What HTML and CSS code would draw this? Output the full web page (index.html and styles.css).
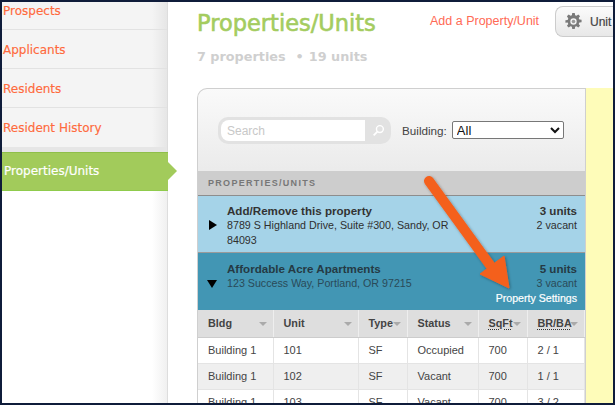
FILE: index.html
```html
<!DOCTYPE html>
<html lang="en">
<head>
<meta charset="utf-8">
<title>Properties/Units</title>
<link rel="stylesheet" href="styles.css">
</head>
<body>
<div class="frame">
  <nav class="sidebar">
    <a class="nav-item nav-first">Prospects</a>
    <a class="nav-item">Applicants</a>
    <a class="nav-item">Residents</a>
    <a class="nav-item nav-last">Resident History</a>
    <a class="nav-active">Properties/Units</a>
  </nav>
  <main class="content">
    <header class="head">
      <h1 class="title">Properties/Units</h1>
      <a class="add-link">Add a Property/Unit</a>
      <button class="unit-btn">
        <svg class="gear" viewBox="0 0 16 16" width="17" height="17"><path fill="#7a7a7a" fill-rule="evenodd" d="M6.800 0h2.400l.3 2.100 1.300.5L12.500 1.300l1.700 1.700-1.300 1.700.6 1.300 2.100.3v2.400l-2.100.3-.6 1.300 1.300 1.700-1.700 1.700-1.700-1.300-1.300.6-.3 2.100H6.800l-.3-2.100-1.300-.6-1.700 1.300-1.700-1.700 1.300-1.700-.6-1.300L.4 9.200V6.800l2.100-.3.6-1.300L1.800 3l1.700-1.700 1.700 1.300 1.300-.5zM8 5a3 3 0 1 0 0 6 3 3 0 0 0 0-6z"/><circle cx="8" cy="8" r="1.700" fill="#999"/></svg>
        <span class="unit-label">Unit Settings</span>
      </button>
    </header>
    <p class="counts"><span>7 properties</span><span class="dot">•</span><span>19 units</span></p>
    <div class="panel-row">
      <section class="panel">
        <div class="filters">
          <div class="search">
            <span class="search-input">Search</span>
            <svg class="search-icon" viewBox="0 0 14 14" width="13" height="13"><circle cx="8.500" cy="5.500" r="3.700" fill="none" stroke="#fff" stroke-width="1.500"/><path d="M5.800 8.300L1.800 12.300" stroke="#fff" stroke-width="2"/></svg>
          </div>
          <label class="building-label">Building:</label>
          <select class="building-select"><option>All</option></select>
        </div>
        <div class="section-bar">PROPERTIES/UNITS</div>
        <div class="prop prop-light">
          <span class="tri tri-right"></span>
          <div class="prop-main">
            <div class="prop-name">Add/Remove this property</div>
            <div class="prop-addr">8789 S Highland Drive, Suite #300, Sandy, OR 84093</div>
          </div>
          <div class="prop-side">
            <div class="prop-name">3 units</div>
            <div class="prop-addr">2 vacant</div>
          </div>
        </div>
        <div class="prop prop-dark">
          <span class="tri tri-down"></span>
          <div class="prop-main">
            <div class="prop-name">Affordable Acre Apartments</div>
            <div class="prop-addr">123 Success Way, Portland, OR 97215</div>
          </div>
          <div class="prop-side">
            <div class="prop-name">5 units</div>
            <div class="prop-addr">3 vacant</div>
            <div class="prop-link">Property Settings</div>
          </div>
        </div>
        <table class="units">
          <colgroup><col class="c1"><col class="c2"><col class="c3"><col class="c4"><col class="c5"><col class="c6"></colgroup>
          <thead>
            <tr>
              <th>Bldg<i class="sort"></i></th>
              <th>Unit<i class="sort"></i></th>
              <th>Type<i class="sort"></i></th>
              <th>Status<i class="sort"></i></th>
              <th><u class="abbr">SqFt</u><i class="sort"></i></th>
              <th><u class="abbr">BR/BA</u><i class="sort"></i></th>
            </tr>
          </thead>
          <tbody>
            <tr><td>Building 1</td><td>101</td><td>SF</td><td>Occupied</td><td>700</td><td>2 / 1</td></tr>
            <tr class="alt"><td>Building 1</td><td>102</td><td>SF</td><td>Vacant</td><td>700</td><td>1 / 1</td></tr>
            <tr><td>Building 1</td><td>103</td><td>SF</td><td>Vacant</td><td>700</td><td>3 / 2</td></tr>
          </tbody>
        </table>
      </section>
      <aside class="note"></aside>
    </div>
  </main>
  <svg class="arrow" viewBox="0 0 615 405" width="615" height="405">
    <defs><filter id="sh" x="-20%" y="-20%" width="140%" height="140%"><feDropShadow dx="1" dy="1" stdDeviation="1.500" flood-color="#000" flood-opacity=".35"/></filter></defs>
    <g filter="url(#sh)">
      <path d="M429 181L490 265" stroke="#f4601c" stroke-width="10" stroke-linecap="round" fill="none"/>
      <path d="M480 274L504 256L509 288Z" fill="#f4601c" stroke="#f4601c" stroke-width="1" stroke-linejoin="round"/>
    </g>
  </svg>
</div>
</body>
</html>
```
FILE: styles.css
```css
* { box-sizing: border-box; }
html, body { margin: 0; padding: 0; }
body { width: 615px; height: 405px; overflow: hidden; background: #0f1c3a; font-family: "Liberation Sans", Arial, sans-serif; }
.frame { position: relative; width: 611px; height: 401px; margin: 2px 0 0 2px; background: #fff; display: flex; overflow: hidden; }
.sidebar { width: 166px; flex: none; height: 100%; border-right: 1px solid #ddd; background: linear-gradient(to right, #fff 0, #fff 150px, #f0f0f0 165px); font-family: "DejaVu Sans", sans-serif; font-size: 12px; position: relative; }
.nav-item { display: block; height: 39px; padding: 13px 0 0 1px; line-height: 15px; color: #ff6a3d; -webkit-text-stroke: .15px #ff6a3d; background: linear-gradient(to right, #f4f4f4 0, #f4f4f4 150px, #e6e6e6 165px); border-bottom: 1px solid #e2e2e2; }
.nav-first { height: 28px; padding-top: 2px; }
.nav-last { height: 44px; border-bottom: 5px solid #e6e6e6; }
.nav-active { display: block; position: relative; height: 39px; width: 166px; padding: 11px 0 0 2px; line-height: 15px; color: #fff; background: #a2cb5b; border-top: 1px solid #8fbf4a; border-bottom: 1px solid #8fcb4c; -webkit-text-stroke: .2px #fff; }
.nav-active::after { content: ""; position: absolute; left: 166px; top: 9px; border-left: 9px solid #a2cb5b; border-top: 9px solid transparent; border-bottom: 9px solid transparent; }
.content { flex: 1; min-width: 0; padding: 8px 0 0 29px; }
.head { display: flex; align-items: flex-start; height: 32px; white-space: nowrap; }
.title { flex: none; margin: 0; width: 233px; font-family: "DejaVu Sans", sans-serif; font-size: 22.500px; line-height: 26px; font-weight: 400; color: #a4cc5f; -webkit-text-stroke: .6px #a4cc5f; }
.add-link { flex: none; width: 125px; margin-top: 4px; font-size: 12.500px; line-height: 15px; color: #ff6a55; }
.unit-btn { flex: none; display: flex; align-items: center; gap: 8px; width: 70px; height: 31px; margin-top: -4px; padding: 0 0 0 9px; border: 1px solid #ccc; border-right: 0; border-radius: 8px 0 0 8px; background: linear-gradient(#fbfbfb, #e8e8e8); font: 400 12px "Liberation Sans", sans-serif; color: #444; overflow: hidden; white-space: nowrap; }
.gear { flex: none; }
.unit-label { flex: none; -webkit-text-stroke: .2px #444; }
.counts { margin: 7px 0 0; display: flex; gap: 6px; font-family: "DejaVu Sans", sans-serif; font-size: 12.800px; line-height: 16px; font-weight: 700; color: #cfcfcf; }
.dot { margin-left: 4px; margin-right: -1px; }
.panel-row { display: flex; margin-top: 23px; height: 320px; }
.panel { width: 389px; flex: none; border: 1px solid #cfcfcf; border-width: 1px 1px 0 1px; border-radius: 10px 0 0 0; background: linear-gradient(#fafafa, #ebebeb 80px); overflow: hidden; }
.filters { display: flex; align-items: center; height: 82px; padding: 0 0 0 20px; }
.search { display: flex; align-items: center; width: 173px; height: 27px; background: #e2e2e2; border-radius: 10px; padding: 0 0 0 3px; }
.search-input { width: 144px; height: 21px; background: #fff; border-radius: 8px 0 0 8px; padding-left: 6px; font-size: 12px; line-height: 23px; color: #c8c8c8; }
.search-icon { margin-left: 7px; }
.building-label { margin-left: 11px; font-size: 11.700px; color: #444; }
.building-select { width: 112px; height: 18px; margin-left: 5px; padding: 0; font: 400 13px "Liberation Sans", sans-serif; color: #111; background: #fff; border: 1px solid #777; border-radius: 2px; }
.section-bar { height: 25px; background: #cdcdcd; border-bottom: 1px solid #8d8d8d; padding-left: 10px; font-size: 9px; line-height: 24px; font-weight: 700; letter-spacing: 1.300px; color: #777; }
.prop { display: flex; padding: 7px 8px 0 0; }
.prop-light { height: 57px; background: #a5d3e8; border-bottom: 1px solid #9a9a9a; }
.prop-dark { height: 57px; padding-top: 8px; background: #4296b4; }
.tri { flex: none; width: 0; height: 0; align-self: flex-start; }
.tri-right { margin: 17px 10px 0 11px; border-left: 8px solid #000; border-top: 5.500px solid transparent; border-bottom: 5.500px solid transparent; }
.tri-down { margin: 19px 10px 0 9px; border-top: 8px solid #000; border-left: 5.500px solid transparent; border-right: 5.500px solid transparent; }
.prop-main { width: 226px; }
.prop-side { margin-left: auto; text-align: right; }
.prop-name { font-size: 11.600px; line-height: 15px; font-weight: 700; color: #333; }
.prop-addr { font-size: 10.700px; line-height: 15px; color: #2f2f2f; }
.prop-dark .prop-addr { color: #2a4a58; }
.prop-dark .prop-name { color: #253a44; }
.prop-link { font-size: 10.600px; line-height: 15px; color: #fff; -webkit-text-stroke: .2px #fff; }
.units { width: 100%; border-collapse: collapse; table-layout: fixed; font-size: 11px; color: #444; }
.c1 { width: 75px; }
.c2 { width: 85px; }
.c3 { width: 49px; }
.c4 { width: 71px; }
.c5 { width: 49px; }
.c6 { width: auto; }
.units th { position: relative; height: 27px; padding: 0 0 0 10px; background: #dedede; border-left: 1px solid #eee; border-right: 1px solid #eee; border-bottom: 1px solid #ccc; text-align: left; font-size: 10.800px; font-weight: 700; color: #444; }
.units th:first-child { border-left: 0; }
.units td { height: 26px; padding: 0 0 0 10px; border: 1px solid #e4e4e4; background: #fff; color: #444; }
.units td:first-child { border-left: 0; }
.units .alt td { background: #efefef; }
.abbr { text-decoration: underline dotted #333; text-underline-offset: 2px; }
.sort { position: absolute; right: 6px; top: 12px; width: 0; height: 0; border-top: 4px solid #aaa; border-left: 4px solid transparent; border-right: 4px solid transparent; }
.note { flex: 1; background: #fefcb9; }
.arrow { position: absolute; left: -2px; top: -2px; pointer-events: none; }
```
